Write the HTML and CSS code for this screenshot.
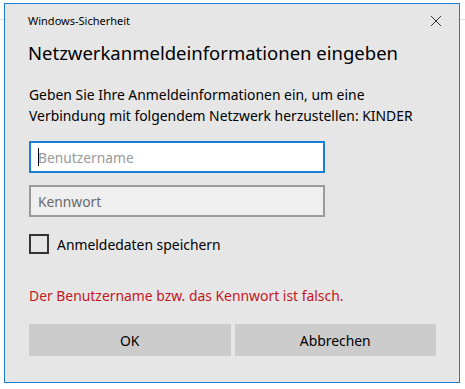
FILE: index.html
```html
<!DOCTYPE html>
<html lang="de">
<head>
<meta charset="utf-8">
<title>Windows-Sicherheit</title>
<link rel="stylesheet" href="styles.css">
</head>
<body>
<div class="window">
  <div class="titlebar">
    <span class="title">Windows-Sicherheit</span>
    <svg class="close" width="12" height="12" viewBox="0 0 12 12"><path d="M1 1L11 11M11 1L1 11" stroke="#333" stroke-width="1" fill="none"/></svg>
  </div>
  <h1 class="heading">Netzwerkanmeldeinformationen eingeben</h1>
  <p class="desc">Geben Sie Ihre Anmeldeinformationen ein, um eine<br>Verbindung mit folgendem Netzwerk herzustellen: KINDER</p>
  <div class="field field-active"><span class="caret"></span><span class="ph">Benutzername</span></div>
  <div class="field field-idle"><span class="ph ph-dark">Kennwort</span></div>
  <label class="check"><span class="box"></span><span>Anmeldedaten speichern</span></label>
  <p class="error">Der Benutzername bzw. das Kennwort ist falsch.</p>
  <div class="buttons">
    <div class="btn">OK</div>
    <div class="btn">Abbrechen</div>
  </div>
</div>
</body>
</html>
```
FILE: styles.css
```css
html, body {
  margin: 0;
  padding: 0;
}
body {
  width: 465px;
  height: 389px;
  background: linear-gradient(#e3e3e3, #e3e3e3) 0 19px / 100% 1px no-repeat, #ffffff;
  font-family: "Noto Sans", "Open Sans", sans-serif;
  color: #000;
  overflow: hidden;
}
.window {
  box-sizing: border-box;
  margin: 3px 0 0 4px;
  width: 456px;
  height: 380px;
  border: 1px solid #1a7fd4;
  background: #e6e6e6;
  padding: 0 23px 0 24px;
  display: flex;
  flex-direction: column;
}
.titlebar {
  height: 32px;
  display: flex;
  align-items: center;
  justify-content: space-between;
  margin-left: -1px;
}
.title {
  font-size: 11px;
  color: #000;
}
.close {
  margin-right: -6px;
  margin-top: 1px;
}
.heading {
  margin: 3px 0 0 0;
  font-weight: normal;
  font-size: 18.5px;
  line-height: 28px;
  color: #000;
  margin-left: -1px;
}
.desc {
  margin: 17px 0 0 0;
  font-size: 13.9px;
  line-height: 21px;
  color: #000;
  white-space: nowrap;
}
.field {
  box-sizing: border-box;
  width: 296px;
  height: 32px;
  display: flex;
  align-items: center;
  padding-left: 7px;
  font-size: 13.8px;
}
.field-active {
  margin-top: 15px;
  border: 2px solid #1a7fd4;
  background: #fff;
}
.field-idle {
  margin-top: 12px;
  border: 2px solid #9a9a9a;
  background: #efefef;
}
.caret {
  width: 1px;
  height: 18px;
  background: #000;
  margin-right: -1px;
}
.ph {
  color: #9a9a9a;
}
.ph-dark {
  color: #6a6a6a;
}
.check {
  margin-top: 17px;
  display: flex;
  align-items: center;
  font-size: 13.9px;
  gap: 8px;
}
.box {
  box-sizing: border-box;
  width: 20px;
  height: 20px;
  border: 2px solid #333;
}
.error {
  margin: 31px 0 0 0;
  font-size: 13.9px;
  line-height: 21px;
  color: #c4161c;
}
.buttons {
  margin-top: 18px;
  display: flex;
  gap: 4px;
}
.btn {
  flex: 1;
  height: 32px;
  background: #cccccc;
  display: flex;
  align-items: center;
  justify-content: center;
  font-size: 13.9px;
}
```
